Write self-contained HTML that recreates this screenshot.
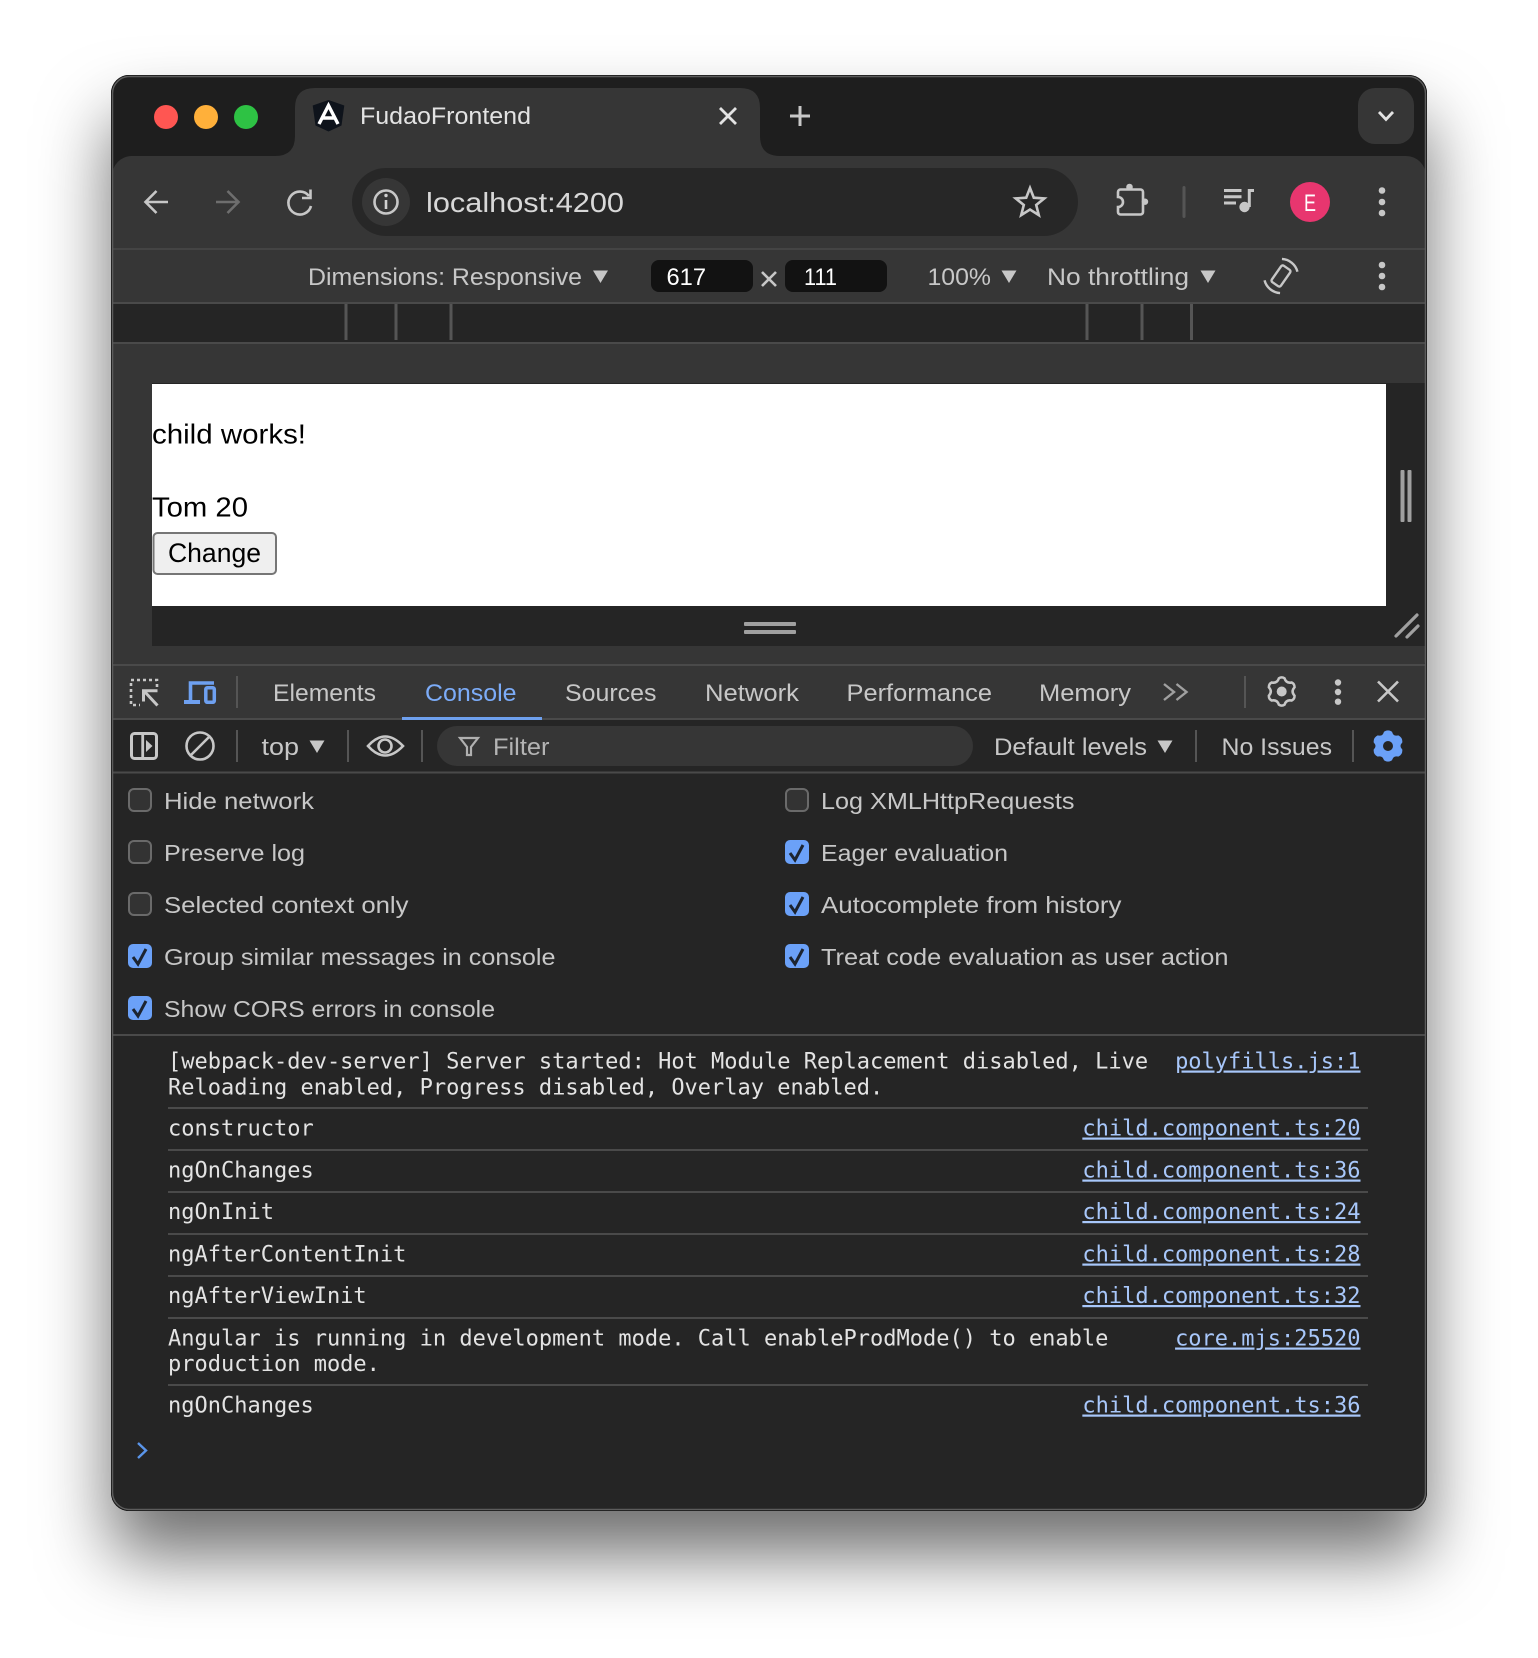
<!DOCTYPE html>
<html><head><meta charset="utf-8"><title>FudaoFrontend</title>
<style>
html,body{margin:0;padding:0;background:#fff;width:1538px;height:1658px;overflow:hidden}
#sh{position:absolute;left:111px;top:75px;width:1316px;height:1436px;border-radius:18px;box-shadow:0 44px 70px rgba(0,0,0,.57)}
svg{position:absolute;left:0;top:0}
text{font-family:"Liberation Sans",sans-serif;font-size:24px;fill:#c7c7c7}
.m{font-family:"DejaVu Sans Mono","Liberation Mono",monospace;font-size:22px;fill:#e3e3e3}
.l{font-family:"DejaVu Sans Mono","Liberation Mono",monospace;font-size:22px;fill:#a8c7fa;text-decoration:underline}
.s{font-size:23.5px}
.b{fill:#000;font-size:28px}
.i{fill:none;stroke:#c7c7c7;stroke-width:2.6}
.sep{fill:#4a4a4a}
.off{fill:#333;stroke:#6a6a6a;stroke-width:2}
.on{fill:#6ba1f8}
.ck{fill:none;stroke:#1c2430;stroke-width:3}
</style></head><body>
<div id="sh"></div>
<svg width="1538" height="1658" viewBox="0 0 1538 1658" xmlns="http://www.w3.org/2000/svg">
<defs>
<clipPath id="w"><rect x="111" y="75" width="1316" height="1436" rx="18"/></clipPath>
<path id="g6" d="M-2.81,-13.2 Q0,-15 2.81,-13.2 Q4.5,-7.8 10.03,-9.03 Q13,-7.5 12.84,-4.17 Q9,0 12.84,4.17 Q13,7.5 10.03,9.03 Q4.5,7.8 2.81,13.2 Q0,15 -2.81,13.2 Q-4.5,7.8 -10.03,9.03 Q-13,7.5 -12.84,4.17 Q-9,0 -12.84,-4.17 Q-13,-7.5 -10.03,-9.03 Q-4.5,-7.8 -2.81,-13.2 Z"/>
</defs>
<g clip-path="url(#w)">
<rect x="111" y="75" width="1316" height="1436" fill="#1e1e1e"/>
<!-- toolbar + tab -->
<rect x="112" y="156" width="1314" height="520" rx="20" fill="#363636"/>
<path d="M275,156 Q295,156 295,136 V108 Q295,88 315,88 H740 Q760,88 760,108 V136 Q760,156 780,156 Z" fill="#363636"/>
<rect x="1358" y="88" width="56" height="56" rx="17" fill="#363636"/>
<circle cx="166" cy="117" r="12" fill="#ff5652"/><circle cx="206" cy="117" r="12" fill="#ffb03a"/><circle cx="246" cy="117" r="12" fill="#2ec244"/>
<!-- logo -->
<polygon points="328.5,100 344.3,105.500 341.500,125.500 328.5,131.500 315.500,125.500 312.700,105.500" fill="#0e131b"/>
<path d="M319,124 L328.5,105.500 L338,124 M322.500,118 H334.500" fill="none" stroke="#fff" stroke-width="3.4"/>
<text x="360" y="124" textLength="171" lengthAdjust="spacingAndGlyphs" style="fill:#e3e3e3">FudaoFrontend</text>
<path d="M720,108 L736,124 M736,108 L720,124" stroke="#e3e3e3" stroke-width="2.8" fill="none"/>
<path d="M790,116 H810 M800,106 V126" stroke="#c7c7c7" stroke-width="3" fill="none"/>
<path d="M1379,112 L1386,119.500 L1393,112" fill="none" stroke="#e3e3e3" stroke-width="2.8"/>
<!-- nav -->
<path class="i" d="M168,202 H146 M156.5,191 L145.5,202 L156.5,213"/>
<path class="i" style="stroke:#6e6e6e" d="M216,202 H238 M227.5,191 L238.5,202 L227.5,213"/>
<path class="i" d="M309,196 A11.5,11.5 0 1 0 311,206 M310.5,189.5 V198 H302"/>
<rect x="352" y="168" width="726" height="68" rx="34" fill="#272727"/>
<rect x="362" y="178" width="48" height="48" rx="24" fill="#363636"/>
<circle class="i" cx="386" cy="202" r="11.5" stroke-width="2.4"/>
<path d="M386,200 V209" stroke="#d0d0d0" stroke-width="2.6"/><circle cx="386" cy="195.5" r="1.7" fill="#d0d0d0"/>
<text x="426" y="212" style="font-size:28px;fill:#d8d8d8" textLength="198" lengthAdjust="spacingAndGlyphs">localhost:4200</text>
<polygon class="i" points="1030,188 1033.8,197.7 1044.3,198.4 1036.2,205 1038.8,215.1 1030,209.5 1021.2,215.1 1023.8,205 1015.7,198.4 1026.2,197.7"/>
<path class="i" d="M1120.500,189.500 H1140.500 a2.500,2.500 0 0 1 2.500,2.500 V212 a2.500,2.500 0 0 1 -2.500,2.500 H1120.500 a2.500,2.500 0 0 1 -2.500,-2.500 V207 a5,5 0 0 0 0,-10 V192 a2.500,2.500 0 0 1 2.500,-2.500 z"/>
<circle cx="1129.500" cy="187" r="3.300" fill="#c7c7c7"/><circle cx="1145" cy="201.700" r="3.200" fill="#c7c7c7"/>
<rect x="1182.500" y="186" width="3" height="32" rx="1.5" fill="#555"/>
<path d="M1224,190.500 H1241.500 M1224,196.800 H1241.500 M1224,203 H1236 M1249.300,189 V207 M1249.300,190.500 H1254" stroke="#c7c7c7" stroke-width="3" fill="none"/>
<circle cx="1244.500" cy="207" r="5.200" fill="#c7c7c7"/>
<circle cx="1310" cy="202" r="20" fill="#e8366f"/>
<text x="1310" y="211" text-anchor="middle" style="fill:#fff;font-size:24px" textLength="12" lengthAdjust="spacingAndGlyphs">E</text>
<g fill="#c7c7c7"><circle cx="1382" cy="190.5" r="3.3"/><circle cx="1382" cy="202" r="3.3"/><circle cx="1382" cy="213" r="3.3"/></g>
<rect x="112" y="248" width="1314" height="2" fill="#444"/>
<!-- device bar -->
<text x="308" y="285" textLength="274" lengthAdjust="spacingAndGlyphs">Dimensions: Responsive</text>
<polygon points="593,270.500 608,270.500 600.500,283" fill="#c7c7c7"/>
<rect x="651" y="260" width="102" height="32" rx="8" fill="#121212"/>
<text x="666.500" y="285" textLength="39.500" lengthAdjust="spacingAndGlyphs" style="fill:#fff">617</text>
<path d="M762,272 L776,286 M776,272 L762,286" stroke="#c7c7c7" stroke-width="2.6" fill="none"/>
<rect x="785" y="260" width="102" height="32" rx="8" fill="#121212"/>
<text x="804" y="285" textLength="33" lengthAdjust="spacingAndGlyphs" style="fill:#fff">111</text>
<text x="927.500" y="285" textLength="63.500" lengthAdjust="spacingAndGlyphs">100%</text>
<polygon points="1001.500,270.500 1016.500,270.500 1009,283" fill="#c7c7c7"/>
<text x="1047" y="285" textLength="142" lengthAdjust="spacingAndGlyphs">No throttling</text>
<polygon points="1200.500,270.500 1215.500,270.500 1208,283" fill="#c7c7c7"/>
<g transform="translate(1281,276) rotate(35)" fill="none" stroke="#c7c7c7" stroke-width="2.4">
<rect x="-5.5" y="-10" width="11" height="20" rx="2"/>
<path d="M-9,-14.500 A17,17 0 0 1 11,-13 M9,14.500 A17,17 0 0 1 -11,13"/>
</g>
<g fill="#c7c7c7"><circle cx="1382" cy="265" r="3.3"/><circle cx="1382" cy="276" r="3.3"/><circle cx="1382" cy="287" r="3.3"/></g>
<!-- rulers -->
<rect x="112" y="302" width="1314" height="2" fill="#4a4a4a"/>
<rect x="112" y="304" width="1314" height="38" fill="#252525"/>
<rect x="112" y="342" width="1314" height="2" fill="#4a4a4a"/>
<g fill="#555"><rect x="344.500" y="304" width="3" height="36"/><rect x="394.500" y="304" width="3" height="36"/><rect x="449.500" y="304" width="3" height="36"/><rect x="1085.500" y="304" width="3" height="36"/><rect x="1140.500" y="304" width="3" height="36"/><rect x="1190" y="304" width="3" height="36"/></g>
<!-- viewport -->
<rect x="152" y="383" width="1274" height="263" fill="#252525"/>
<rect x="152" y="384" width="1234" height="222" fill="#fff"/>
<text class="b" x="152" y="443.500" textLength="154" lengthAdjust="spacingAndGlyphs">child works!</text>
<text class="b" x="152" y="516.500" textLength="96" lengthAdjust="spacingAndGlyphs">Tom 20</text>
<rect x="153.5" y="533" width="122.500" height="41" rx="4" fill="#efefef" stroke="#767676" stroke-width="2"/>
<text class="b" x="168" y="562" textLength="93" lengthAdjust="spacingAndGlyphs" style="font-size:27px">Change</text>
<g fill="#a0a0a0"><rect x="744" y="622" width="52" height="4" rx="1"/><rect x="744" y="630" width="52" height="4" rx="1"/>
<rect x="1400.5" y="470" width="4" height="52" rx="1"/><rect x="1407.5" y="470" width="4" height="52" rx="1"/></g>
<path d="M1396,636 L1417,615 M1407,637 L1418,626" stroke="#a0a0a0" stroke-width="3.200" fill="none" stroke-linecap="round"/>
<!-- devtools -->
<rect x="112" y="664" width="1314" height="2" fill="#4a4a4a"/>
<rect x="112" y="666" width="1314" height="53" fill="#363636"/>
<rect x="112" y="718" width="1314" height="2" fill="#4a4a4a"/>
<rect x="112" y="720" width="1314" height="792" fill="#252525"/>
<rect x="131" y="680" width="26" height="25" fill="none" stroke="#c7c7c7" stroke-width="2.6" stroke-dasharray="3 3"/>
<rect x="140" y="687.500" width="20" height="20" fill="#363636"/>
<path d="M157.500,690.800 H143.500 V701.500 M144,691 L157.500,705.500" fill="none" stroke="#c7c7c7" stroke-width="3"/>
<path d="M214,683 H190.500 V702" fill="none" stroke="#6ea0f0" stroke-width="3.600"/>
<rect x="184" y="700" width="16" height="4" fill="#6ea0f0"/>
<rect x="205.800" y="687.800" width="8.500" height="14.500" rx="1.500" fill="none" stroke="#6ea0f0" stroke-width="3.500"/>
<rect x="236" y="676" width="2" height="32" fill="#555"/>
<text x="273" y="701" textLength="103" lengthAdjust="spacingAndGlyphs">Elements</text>
<text x="425" y="701" textLength="91.500" lengthAdjust="spacingAndGlyphs" style="fill:#7cacf8">Console</text>
<rect x="402" y="717" width="140" height="3" fill="#6ea0ee"/>
<text x="565" y="701" textLength="91.500" lengthAdjust="spacingAndGlyphs">Sources</text>
<text x="705" y="701" textLength="94" lengthAdjust="spacingAndGlyphs">Network</text>
<text x="846.500" y="701" textLength="145.500" lengthAdjust="spacingAndGlyphs">Performance</text>
<text x="1039" y="701" textLength="92" lengthAdjust="spacingAndGlyphs">Memory</text>
<path d="M1164,684 L1174,692 L1164,700 M1176.500,684 L1186.500,692 L1176.500,700" fill="none" stroke="#a0a0a0" stroke-width="2.400"/>
<rect x="1244" y="676" width="2" height="32" fill="#555"/>
<use href="#g6" x="1281.700" y="691.500" fill="none" stroke="#c7c7c7" stroke-width="2.500"/>
<circle cx="1281.700" cy="691.500" r="5" fill="#c7c7c7"/>
<g fill="#c7c7c7"><circle cx="1338" cy="682.500" r="3.200"/><circle cx="1338" cy="692" r="3.200"/><circle cx="1338" cy="701.700" r="3.200"/></g>
<path d="M1378,681.500 L1398,701.500 M1398,681.500 L1378,701.500" stroke="#c7c7c7" stroke-width="2.600" fill="none"/>
<!-- console toolbar -->
<rect x="112" y="771.500" width="1314" height="2" fill="#4a4a4a"/>
<rect class="i" x="131.500" y="733.500" width="25" height="25" rx="3" style="stroke-width:3"/>
<rect x="141.300" y="733" width="2.800" height="26" fill="#c7c7c7"/>
<polygon points="146,740 152.500,746 146,752" fill="#c7c7c7"/>
<circle class="i" cx="200" cy="746" r="13.500"/><path class="i" d="M190.500,755.500 L209.500,736.500"/>
<rect x="236" y="730" width="2" height="32" fill="#555"/>
<text x="261.500" y="755" textLength="37.500" lengthAdjust="spacingAndGlyphs">top</text>
<polygon points="309.500,740.500 324.500,740.500 317,753" fill="#c7c7c7"/>
<rect x="347" y="730" width="2" height="32" fill="#555"/>
<path class="i" d="M368,746 Q385,727 403,746 Q385,765 368,746 z"/><circle class="i" cx="385" cy="746" r="6.500"/>
<rect x="421" y="730" width="2" height="32" fill="#555"/>
<rect x="437" y="726" width="536" height="40" rx="20" fill="#363636"/>
<path d="M460,738 H478 L471,747 V755 H467 V747 Z" fill="none" stroke="#b0b0b0" stroke-width="2.200"/>
<text x="493" y="755" textLength="56.500" lengthAdjust="spacingAndGlyphs" style="fill:#b4b4b4">Filter</text>
<text x="994" y="755" textLength="153" lengthAdjust="spacingAndGlyphs">Default levels</text>
<polygon points="1157.500,740.500 1172.500,740.500 1165,753" fill="#c7c7c7"/>
<rect x="1195" y="730" width="2" height="32" fill="#555"/>
<text x="1221.500" y="755" textLength="110.500" lengthAdjust="spacingAndGlyphs">No Issues</text>
<rect x="1352" y="730" width="2" height="32" fill="#555"/>
<use href="#g6" x="1388" y="746" fill="#6ba1f8" stroke="#6ba1f8" stroke-width="3"/><circle cx="1388" cy="746" r="5" fill="#252525"/>
<!-- settings -->
<g>
<rect class="off" x="129" y="789" width="22" height="22" rx="5"/><text class="s" x="164" y="809" textLength="150" lengthAdjust="spacingAndGlyphs">Hide network</text>
<rect class="off" x="129" y="841" width="22" height="22" rx="5"/><text class="s" x="164" y="861" textLength="141" lengthAdjust="spacingAndGlyphs">Preserve log</text>
<rect class="off" x="129" y="893" width="22" height="22" rx="5"/><text class="s" x="164" y="913" textLength="244.500" lengthAdjust="spacingAndGlyphs">Selected context only</text>
<rect class="on" x="128" y="944" width="24" height="24" rx="5"/><path class="ck" d="M133,957 L138,964 L146,949"/><text class="s" x="164" y="965" textLength="391.500" lengthAdjust="spacingAndGlyphs">Group similar messages in console</text>
<rect class="on" x="128" y="996" width="24" height="24" rx="5"/><path class="ck" d="M133,1009 L138,1016 L146,1001"/><text class="s" x="164" y="1017" textLength="331" lengthAdjust="spacingAndGlyphs">Show CORS errors in console</text>
<rect class="off" x="786" y="789" width="22" height="22" rx="5"/><text class="s" x="821" y="809" textLength="253.500" lengthAdjust="spacingAndGlyphs">Log XMLHttpRequests</text>
<rect class="on" x="785" y="840" width="24" height="24" rx="5"/><path class="ck" d="M790,853 L795,860 L803,845"/><text class="s" x="821" y="861" textLength="187" lengthAdjust="spacingAndGlyphs">Eager evaluation</text>
<rect class="on" x="785" y="892" width="24" height="24" rx="5"/><path class="ck" d="M790,905 L795,912 L803,897"/><text class="s" x="821" y="913" textLength="300.500" lengthAdjust="spacingAndGlyphs">Autocomplete from history</text>
<rect class="on" x="785" y="944" width="24" height="24" rx="5"/><path class="ck" d="M790,957 L795,964 L803,949"/><text class="s" x="821" y="965" textLength="407.500" lengthAdjust="spacingAndGlyphs">Treat code evaluation as user action</text>
</g>
<rect x="112" y="1034" width="1314" height="2" fill="#4a4a4a"/>
<!-- console -->
<text class="m" x="168" y="1068.500">[webpack-dev-server] Server started: Hot Module Replacement disabled, Live</text>
<text class="m" x="168" y="1094.500">Reloading enabled, Progress disabled, Overlay enabled.</text>
<text class="l" x="1360.500" y="1068.500" text-anchor="end">polyfills.js:1</text>
<rect class="sep" x="168" y="1107" width="1200" height="2"/>
<text class="m" x="168" y="1135.500">constructor</text><text class="l" x="1360.500" y="1135.500" text-anchor="end">child.component.ts:20</text>
<rect class="sep" x="168" y="1149" width="1200" height="2"/>
<text class="m" x="168" y="1177.500">ngOnChanges</text><text class="l" x="1360.500" y="1177.500" text-anchor="end">child.component.ts:36</text>
<rect class="sep" x="168" y="1191" width="1200" height="2"/>
<text class="m" x="168" y="1219">ngOnInit</text><text class="l" x="1360.500" y="1219" text-anchor="end">child.component.ts:24</text>
<rect class="sep" x="168" y="1233" width="1200" height="2"/>
<text class="m" x="168" y="1261.500">ngAfterContentInit</text><text class="l" x="1360.500" y="1261.500" text-anchor="end">child.component.ts:28</text>
<rect class="sep" x="168" y="1275" width="1200" height="2"/>
<text class="m" x="168" y="1303">ngAfterViewInit</text><text class="l" x="1360.500" y="1303" text-anchor="end">child.component.ts:32</text>
<rect class="sep" x="168" y="1317" width="1200" height="2"/>
<text class="m" x="168" y="1345.500">Angular is running in development mode. Call enableProdMode() to enable</text><text class="l" x="1360.500" y="1345.500" text-anchor="end">core.mjs:25520</text>
<text class="m" x="168" y="1371">production mode.</text>
<rect class="sep" x="168" y="1384" width="1200" height="2"/>
<text class="m" x="168" y="1412.500">ngOnChanges</text><text class="l" x="1360.500" y="1412.500" text-anchor="end">child.component.ts:36</text>
<path d="M138,1443 L146,1450.500 L138,1458" fill="none" stroke="#5a95ea" stroke-width="2.400"/>
</g>
<rect x="111.500" y="75.500" width="1315" height="1435" rx="18" fill="none" stroke="#111" stroke-width="1"/>
<rect x="112.500" y="76.500" width="1313" height="1433" rx="17" fill="none" stroke="#5c5c5c" stroke-width="1.500"/>
</svg>
</body></html>
